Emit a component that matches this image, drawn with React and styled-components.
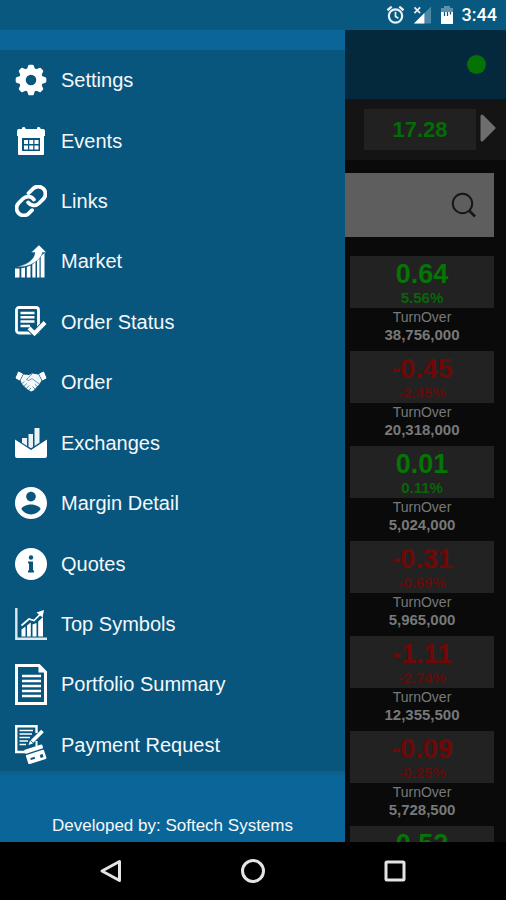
import React, { useState } from 'react'
import styled, { createGlobalStyle } from 'styled-components'

const BLUE = '#08567e';

const menu = [
  { label: 'Settings', Icon: SettingsIcon },
  { label: 'Events', Icon: EventsIcon },
  { label: 'Links', Icon: LinksIcon },
  { label: 'Market', Icon: MarketIcon },
  { label: 'Order Status', Icon: OrderStatusIcon },
  { label: 'Order', Icon: OrderIcon },
  { label: 'Exchanges', Icon: ExchangesIcon },
  { label: 'Margin Detail', Icon: MarginIcon },
  { label: 'Quotes', Icon: QuotesIcon },
  { label: 'Top Symbols', Icon: TopSymbolsIcon },
  { label: 'Portfolio Summary', Icon: PortfolioIcon },
  { label: 'Payment Request', Icon: PaymentIcon },
];

const quotes = [
  { change: '0.64', percent: '5.56%', turnover: '38,756,000' },
  { change: '-0.45', percent: '-2.45%', turnover: '20,318,000' },
  { change: '0.01', percent: '0.11%', turnover: '5,024,000' },
  { change: '-0.31', percent: '-0.69%', turnover: '5,965,000' },
  { change: '-1.11', percent: '-2.74%', turnover: '12,355,500' },
  { change: '-0.09', percent: '-0.25%', turnover: '5,728,500' },
  { change: '0.52' },
];

export default function App() {
  const [search, setSearch] = useState('');

  return (
    <Screen>
      <GlobalStyle />
      <StatusBar>
        <AlarmIcon />
        <SignalIcon />
        <BatteryIcon />
        <Clock>3:44</Clock>
      </StatusBar>

      <Content>
        <Drawer>
          <MenuList>
            {menu.map(({ label, Icon }) => (
              <li key={label}>
                <MenuLink href="#">
                  <IconBox><Icon /></IconBox>
                  {label}
                </MenuLink>
              </li>
            ))}
          </MenuList>
          <Credit>Developed by: Softech Systems</Credit>
        </Drawer>

        <Main>
          <Toolbar><Online /></Toolbar>
          <IndexBar>
            <IndexValue>17.28</IndexValue>
            <NextButton aria-label="Next index">
              <svg width="16" height="28" viewBox="0 0 16 28">
                <path d="M2 2L14 14L2 26z" fill="#6e6e6e" stroke="#6e6e6e" strokeWidth="3" strokeLinejoin="round" />
              </svg>
            </NextButton>
          </IndexBar>
          <SearchBox>
            <SearchInput
              aria-label="Search symbol"
              value={search}
              onChange={(e) => setSearch(e.target.value)}
            />
            <SearchButton aria-label="Search">
              <svg width="26" height="26" viewBox="0 0 26 26" fill="none" stroke="#161616" strokeWidth="2">
                <circle cx="11.500" cy="11.500" r="9.700" />
                <path d="M18 18.500L24 24.500" strokeWidth="2.500" />
              </svg>
            </SearchButton>
          </SearchBox>
          <QuoteList>
            {quotes.map((quote) => (
              <li key={quote.change}>
                <Tile $down={quote.change.startsWith('-')}>
                  <Change>{quote.change}</Change>
                  {quote.percent && <Percent>{quote.percent}</Percent>}
                </Tile>
                {quote.turnover && (
                  <>
                    <TurnoverLabel>TurnOver</TurnoverLabel>
                    <TurnoverValue>{quote.turnover}</TurnoverValue>
                  </>
                )}
              </li>
            ))}
          </QuoteList>
        </Main>
      </Content>

      <NavBar>
        <NavButton aria-label="Back">
          <svg width="26" height="26" viewBox="0 0 26 26"><path d="M21.500 3.500V22.500L4 13z" /></svg>
        </NavButton>
        <NavButton aria-label="Home">
          <svg width="26" height="26" viewBox="0 0 26 26"><circle cx="13" cy="13" r="10.500" /></svg>
        </NavButton>
        <NavButton aria-label="Recent apps">
          <svg width="26" height="26" viewBox="0 0 26 26"><rect x="4" y="4" width="18" height="18" rx="1" /></svg>
        </NavButton>
      </NavBar>
    </Screen>
  )
}

/* status bar icons */

function AlarmIcon() {
  return (
    <svg width="19" height="20" viewBox="0 0 20 20" fill="none" stroke="#e8f1f6" strokeWidth="2.300">
      <circle cx="10" cy="11" r="7" />
      <path d="M1.500 5L6 1.300M18.500 5L14 1.300" strokeWidth="2.400" />
      <path d="M10 6.500V11.500L13 13.500" strokeWidth="1.800" />
    </svg>
  )
}

function SignalIcon() {
  return (
    <svg width="19" height="20" viewBox="0 0 20 20">
      <path d="M19 1V19H1z" fill="#4b87a6" />
      <path d="M12 8V19H1z" fill="#fff" />
      <path d="M1.500 2L7.500 8M7.500 2L1.500 8" stroke="#e8f1f6" strokeWidth="1.800" />
    </svg>
  )
}

function BatteryIcon() {
  return (
    <svg width="14" height="20" viewBox="0 0 14 20">
      <path d="M4 1H10V3H13V8H1V3H4z" fill="#5f91ac" />
      <path d="M1 7H13V19H1z" fill="#fff" />
      <path d="M4.500 7V11M7.500 7V11M10.500 7V9.500" stroke={BLUE} strokeWidth="1.200" />
    </svg>
  )
}

/* menu icons */

function SettingsIcon() {
  return (
    <svg width="32" height="32" viewBox="0 0 32 32" fill="none" stroke="#fff">
      <circle cx="16" cy="16" r="8.600" strokeWidth="6.600" />
      {[0, 45, 90, 135, 180, 225, 270, 315].map((angle) => (
        <path key={angle} d="M13.500 5L14.500 2H17.500L18.500 5z" fill="#fff" strokeWidth="2.600" strokeLinejoin="round" transform={`rotate(${angle} 16 16)`} />
      ))}
    </svg>
  )
}

function EventsIcon() {
  return (
    <svg width="30" height="30" viewBox="0 0 30 30" fill="#fff">
      <path d="M1 5Q1 3 3 3H6V2Q6 1 7.500 1T9.500 2V3H21V2Q21 1 22.500 1T24.500 2V3H27Q29 3 29 5V10H28V28Q28 29 27 29H3Q2 29 2 28V10H1z" />
      <path d="M6 12H24V25H6z" fill={BLUE} />
      {[8, 13.25, 18.5].map((x) => (
        <path key={x} d={`M${x} 14h4v4h-4zM${x} 19.500h4v4h-4z`} />
      ))}
    </svg>
  )
}

function LinksIcon() {
  return (
    <svg width="32" height="32" viewBox="1 1 22 22" fill="none" stroke="#fff" strokeWidth="2.600" strokeLinecap="round">
      <path d="M10 13a5 5 0 0 0 7.540.540l3-3a5 5 0 0 0-7.070-7.070l-3.200 3.200" />
      <path d="M14 11a5 5 0 0 0-7.540-.540l-3 3a5 5 0 0 0 7.070 7.070l2.200-2.200" />
    </svg>
  )
}

function MarketIcon() {
  return (
    <svg width="32" height="33" viewBox="0 0 32 33" fill="#fff">
      <path d="M0 23.500H4.500V32.500H0zM6.300 23.300L10 22.500V32.500H6.300zM11.800 22L15.500 20.500V32.500H11.800zM17.300 19.500L20.500 16.500V32.500H17.300zM22 15.500L24.500 12.500V32.500H22zM25.700 11L29.500 8V32.500H25.700z" />
      <path d="M24 0L31.500 7.500H27.500C26 15 16 22.500 1 22C12 20 19 15 20 7.500H16z" stroke={BLUE} strokeWidth=".4" />
    </svg>
  )
}

function OrderStatusIcon() {
  return (
    <svg width="32" height="31" viewBox="0 0 32 31" fill="none" stroke="#fff">
      <rect x="1.500" y="1.500" width="22" height="25.500" rx="2.500" strokeWidth="2.800" />
      <path d="M5.500 7H19.500M5.500 11.300H19.500M5.500 15.600H19.500M5.500 19.900H15" strokeWidth="2.500" />
      <path d="M14 22L19.500 27.500L30 16.500" stroke={BLUE} strokeWidth="6" />
      <path d="M14 22L19.500 27.500L30 16.500" strokeWidth="4" />
    </svg>
  )
}

function OrderIcon() {
  return (
    <svg width="32" height="22" viewBox="0 0 32 22">
      <path d="M3.500 1L7.500 3L4.500 9L1 7zM28.500 1L24.500 3L27.500 9L31 7z" fill="#fff" stroke="#fff" strokeLinejoin="round" />
      <path d="M8.500 3.500L14 4L17 2.500L23.500 3.500L26.500 9.500L24.500 13L18.500 19.500L16 20.500L12 18L7 13L5.500 9.500z" fill="#f3f7fa" />
      <path d="M17 3L11.500 8.500Q13.500 11 17 7.500L25 13.500M20 13.500L23.500 16.500M17.500 15.500L20.500 18.500M6.500 13L9.500 10.500M8.500 15.500L12 12.500M11 18L14 14.500M13.500 19.500L16 17" fill="none" stroke={BLUE} strokeWidth=".6" />
    </svg>
  )
}

function ExchangesIcon() {
  return (
    <svg width="32" height="30" viewBox="0 0 32 30" fill="#fff">
      <path d="M0 11.500L16 22L32 11.500V28Q32 30 30 30H2Q0 30 0 28z" />
      <path d="M7 10H12V18L7 14.700zM13.500 6H18V19L16 20.300L13.500 18.800zM19.500 0H24.500V14.700L19.500 18z" fill="#e9f2f7" />
    </svg>
  )
}

function MarginIcon() {
  return (
    <svg width="32" height="32" viewBox="2 2 20 20" fill="#fff">
      <path d="M12 2C6.480 2 2 6.480 2 12s4.480 10 10 10 10-4.480 10-10S17.520 2 12 2zm0 3c1.660 0 3 1.340 3 3s-1.340 3-3 3-3-1.340-3-3 1.340-3 3-3zm0 14.200c-2.500 0-4.710-1.280-6-3.220.03-1.990 4-3.080 6-3.080 1.990 0 5.970 1.090 6 3.080-1.290 1.940-3.500 3.220-6 3.220z" />
    </svg>
  )
}

function QuotesIcon() {
  return (
    <svg width="32" height="32" viewBox="0 0 32 32">
      <circle cx="16" cy="16" r="16" fill="#fff" />
      <circle cx="16" cy="9.500" r="2.200" fill={BLUE} />
      <path d="M13 13.500H18V22.500H19V24.500H13V22.500H14V15.500H13z" fill={BLUE} />
    </svg>
  )
}

function TopSymbolsIcon() {
  return (
    <svg width="32" height="32" viewBox="0 0 32 32" fill="none" stroke="#fff">
      <path d="M1.300 0V30.700H32" strokeWidth="2.400" stroke="#dce9f1" />
      <path d="M6.500 21.500L10.500 18.500V28.500H6.500zM12 17.500L15.800 14.500V28.500H12zM17.500 16.500L21.500 15V28.500H17.500zM23.200 13.500L28 9V28.500H23.200z" fill="#fff" stroke="none" />
      <path d="M6.500 17.500L14 11L19 12.500L26 5.500" strokeWidth="1.700" />
      <path d="M21.500 4.500L29 2L27.500 9.500z" fill="#fff" stroke="none" />
    </svg>
  )
}

function PortfolioIcon() {
  return (
    <svg width="32" height="41" viewBox="0 0 32 41" fill="none" stroke="#fff">
      <path d="M1.500 1.500H24L30.500 8V39.500H1.500z" strokeWidth="3" />
      <path d="M23.500 1V8.500H31z" fill="#fff" stroke="none" />
      <path d="M7 12H26M7 17H26M7 22H26M7 27H26M7 32H26" strokeWidth="2.300" />
    </svg>
  )
}

function PaymentIcon() {
  return (
    <svg width="32" height="39" viewBox="0 0 32 39" fill="none" stroke="#fff">
      <path d="M21.500 8V1.200H1.200V27H11" strokeWidth="2.400" />
      <path d="M21.500 16V21" strokeWidth="2" />
      <path d="M4.500 5.500H18M4.500 9H17M4.500 12.500H15M4.500 16H13M4.500 19.500H11" strokeWidth="1.700" />
      <path d="M27.500 6L17 16.500" strokeWidth="3.800" />
      <path d="M15 15.500L18 18.500L13.500 20z" fill="#fff" stroke="none" />
      <g transform="rotate(-18 20 30)" fill="#fff" stroke="none">
        <rect x="11" y="22" width="19" height="4" rx="1" />
        <rect x="11" y="27.500" width="19" height="9.500" rx="1" />
        <path d="M14.500 31.500H19V33.500H14.500zM24.500 31.500H27.500V34.500H24.500z" fill={BLUE} />
      </g>
    </svg>
  )
}

const GlobalStyle = createGlobalStyle`
  * {
    box-sizing: border-box;
  }

  body {
    margin: 0;
    background: #000;
    font-family: 'Liberation Sans', Arial, sans-serif;
  }

  button {
    padding: 0;
    border: 0;
    background: none;
    cursor: pointer;
  }

  ul {
    margin: 0;
    padding: 0;
    list-style: none;
  }

  svg {
    display: block;
  }
`

const Screen = styled.div`
  display: flex;
  flex-direction: column;
  height: 100vh;
`

const StatusBar = styled.header`
  display: flex;
  align-items: center;
  justify-content: flex-end;
  gap: 8px;
  flex: none;
  height: 30px;
  padding: 0 9px;
  background: #09587f;
`

const Clock = styled.time`
  color: #fff;
  font-family: Roboto, sans-serif;
  font-size: 18px;
  font-weight: 500;
  line-height: 30px;
`

const Content = styled.div`
  display: grid;
  grid-template-columns: 15fr 7fr;
  grid-template-rows: 100%;
  flex: 1;
  min-height: 0;
  overflow: hidden;
`

const Drawer = styled.nav`
  display: flex;
  flex-direction: column;
  min-height: 0;
  padding-top: 20px;
  background: #0a6598;
`

const MenuList = styled.ul`
  display: grid;
  grid-auto-rows: 1fr;
  flex: 1;
  background: ${BLUE};
  box-shadow: inset 0 -4px 0 #095f8e;
`

const MenuLink = styled.a`
  display: flex;
  align-items: center;
  gap: 14px;
  height: 100%;
  padding-left: 15px;
  color: #f6f8fb;
  font-size: 20px;
  line-height: 24px;
  text-decoration: none;
`

const IconBox = styled.span`
  display: flex;
  justify-content: center;
  flex: none;
  width: 32px;
`

const Credit = styled.p`
  margin: 0;
  padding: 41px 0 6px;
  color: #f6f8fb;
  font-size: 17px;
  line-height: 20px;
  text-align: center;
`

const Main = styled.main`
  display: flex;
  flex-direction: column;
  min-width: 0;
  overflow: hidden;
  background: #0a0a0a;
`

const Toolbar = styled.div`
  display: flex;
  align-items: center;
  justify-content: flex-end;
  flex: none;
  height: 69px;
  padding-right: 20px;
  background: #04293d;
`

const Online = styled.span`
  width: 19px;
  height: 19px;
  border-radius: 50%;
  background: #047204;
`

const IndexBar = styled.div`
  display: flex;
  align-items: center;
  gap: 4px;
  flex: none;
  height: 61px;
  padding: 0 10px 0 19px;
  background: #141414;
`

const IndexValue = styled.output`
  flex: 1;
  background: #212121;
  color: #056c05;
  font-size: 22px;
  font-weight: bold;
  line-height: 41px;
  text-align: center;
`

const NextButton = styled.button`
  padding-bottom: 4px;
`

const SearchBox = styled.form`
  display: flex;
  flex: none;
  height: 64px;
  margin: 13px 12px 19px 0;
  background: #5e5e5e;
`

const SearchInput = styled.input`
  flex: 1;
  min-width: 0;
  padding: 0 10px;
  border: 0;
  background: none;
  color: #161616;
  font: inherit;
  outline: none;
`

const SearchButton = styled.button`
  padding: 0 17px;
`

const QuoteList = styled.ul`
  display: flex;
  flex-direction: column;
  gap: 7px;
  padding: 0 12px 0 5px;
  text-align: center;
`

const Tile = styled.div`
  min-height: 52px;
  padding: 3px 0 1px;
  background: #222;
  color: ${(props) => (props.$down ? '#700808' : '#057505')};
  font-weight: bold;
`

const Change = styled.div`
  font-size: 27px;
  line-height: 30px;
`

const Percent = styled.div`
  font-size: 15px;
  line-height: 18px;
  opacity: 0.8;
`

const TurnoverLabel = styled.div`
  color: #787878;
  font-size: 14px;
  line-height: 18px;
`

const TurnoverValue = styled.div`
  color: #787878;
  font-size: 15px;
  font-weight: bold;
  line-height: 18px;
`

const NavBar = styled.footer`
  display: flex;
  flex: none;
  height: 58px;
  padding: 0 40px;
  background: #000;
`

const NavButton = styled.button`
  display: flex;
  align-items: center;
  justify-content: center;
  flex: 1;

  svg {
    fill: none;
    stroke: #e4e4e4;
    stroke-width: 3px;
    stroke-linejoin: round;
  }
`
